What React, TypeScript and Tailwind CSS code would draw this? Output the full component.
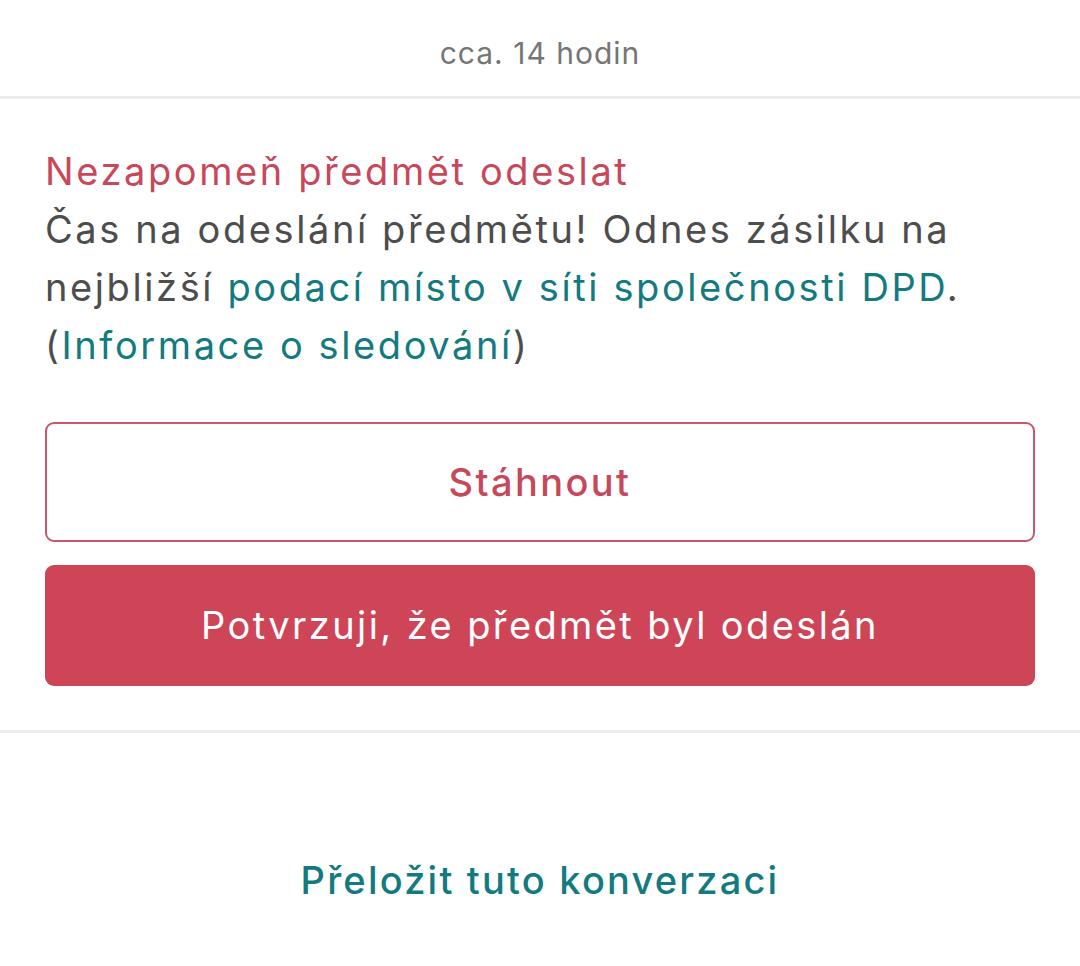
import React from "react";

const font = { fontFamily: "Inter, 'Noto Sans', sans-serif" };

export default function App() {
  return (
    <div className="h-[966px] w-[1080px] overflow-hidden bg-white" style={font}>
      {/* time stamp */}
      <div className="flex h-[96px] items-center justify-center pt-[10px] text-[30px] tracking-[1px] text-[#767676]">
        cca. 14 hodin
      </div>
      <div className="h-[3px] bg-[#ececec]" />

      {/* message */}
      <div className="px-[45px] pt-[43px] tracking-[2.6px]">
        <p className="text-[38px] leading-[58px] text-[#c8485b]">Nezapomeň předmět odeslat</p>
        <p className="text-[38px] leading-[58px] text-[#4d4d4d]">
          Čas na odeslání předmětu! Odnes zásilku na nejbližší{" "}
          <span className="text-[#137a80]">podací místo v síti společnosti DPD</span>. (
          <span className="text-[#137a80]">Informace o sledování</span>)
        </p>

        <div className="mt-[48px] flex flex-col gap-[23px]">
          <button className="flex h-[120px] items-center justify-center rounded-[9px] border-[2.5px] border-[#c8576a] text-[38px] font-medium tracking-[2.4px] text-[#c8485b]">
            Stáhnout
          </button>
          <button className="flex h-[121px] items-center justify-center rounded-[9px] bg-[#cd4557] text-[38px] tracking-[2.4px] text-white">
            Potvrzuji, že předmět byl odeslán
          </button>
        </div>
      </div>

      <div className="mt-[44px] h-[3px] bg-[#ededed]" />

      <div className="flex h-[300px] items-center justify-center pb-[6px] text-[38px] font-medium tracking-[2.2px] text-[#137a80]">
        Přeložit tuto konverzaci
      </div>
    </div>
  );
}
